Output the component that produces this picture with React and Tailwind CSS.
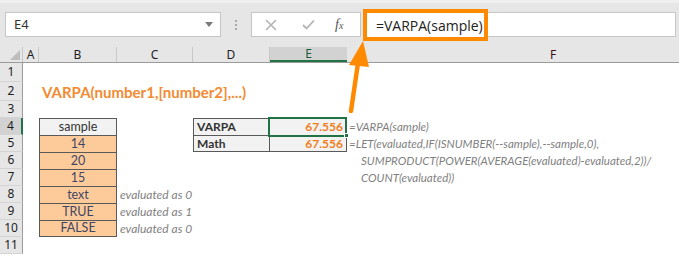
import React from 'react';

const cellFont = { fontFamily: 'Lato, "Open Sans", sans-serif' };

const RowHead = ({ n, active }) => (
  <div
    className={`w-[23px] shrink-0 flex items-center justify-center text-[12px] border-b border-[#d4d4d4] ${
      active
        ? 'bg-[#d2d2d2] border-r-2 border-r-[#217346] text-[#1e1e1e]'
        : 'bg-[#e6e6e6] border-r border-r-[#9b9b9b] text-[#1e1e1e]'
    }`}
    style={{ fontFamily: '"Noto Sans", sans-serif' }}
  >
    {n}
  </div>
);

const Row = ({ n, h, active, children }) => (
  <div className={`flex ${h}`}>
    <RowHead n={n} active={active} />
    {children}
  </div>
);

const A = () => <div className="w-[16px] shrink-0" />;
const C = ({ children }) => (
  <div className="w-[76px] shrink-0 flex items-center pl-[3px] whitespace-nowrap text-[12px] italic text-[#7f7f7f]">
    {children}
  </div>
);
const EmptyC = () => <div className="w-[76px] shrink-0" />;
const EmptyB = () => <div className="w-[78px] shrink-0" />;
const EmptyDE = () => <div className="w-[154px] shrink-0" />;

const SampleCell = ({ children, head, last }) => (
  <div
    className={`w-[78px] shrink-0 flex items-center justify-center text-[12.5px] border-l border-r border-t border-[#595959] ${
      last ? 'border-b' : ''
    } ${head ? 'bg-[#f2f2f2] text-[#333]' : 'bg-[#fdcb99] text-[#3f4566]'}`}
  >
    {children}
  </div>
);

const F = ({ children, indent }) => (
  <div
    className={`flex-1 flex items-center whitespace-nowrap text-[11.5px] italic text-[#7f7f7f] ${
      indent ? 'pl-[14px]' : 'pl-[2px]'
    }`}
  >
    {children}
  </div>
);

const Cols = [
  { l: 'A', w: 'w-[16px]' },
  { l: 'B', w: 'w-[78px]' },
  { l: 'C', w: 'w-[76px]' },
  { l: 'D', w: 'w-[77px]' },
];

export default function App() {
  return (
    <div className="relative w-[679px] h-[255px] overflow-hidden bg-white" style={cellFont}>
      {/* formula bar */}
      <div className="h-[47px] bg-[#e6e6e6] border-t-[3px] border-[#efefef] flex items-start pt-[6px]">
        <div className="ml-[5px] mt-[3px] w-[216px] h-[25px] bg-white border border-[#c6c6c6] flex items-center justify-between pl-[8px] pr-[7px]">
          <span className="text-[13px] text-[#333]" style={{ fontFamily: '"Noto Sans", sans-serif' }}>
            E4
          </span>
          <svg width="8" height="5" viewBox="0 0 8 5">
            <path d="M0 0h8L4 5z" fill="#7a7a7a" />
          </svg>
        </div>
        <div className="w-[30px] mt-[3px] h-[25px] flex flex-col items-center justify-center gap-[2px]">
          <span className="w-[2px] h-[2px] bg-[#a8a8a8]" />
          <span className="w-[2px] h-[2px] bg-[#a8a8a8]" />
          <span className="w-[2px] h-[2px] bg-[#a8a8a8]" />
        </div>
        <div className="mt-[3px] w-[110px] h-[25px] bg-white border border-[#c6c6c6] flex items-center pl-[13px]">
          <svg width="12" height="12" viewBox="0 0 12 12">
            <path d="M1 1L11 11M11 1L1 11" stroke="#b4b4b4" strokeWidth="1.6" />
          </svg>
          <svg className="ml-[25px]" width="13" height="11" viewBox="0 0 13 11">
            <path d="M1 6L4.5 9.5L12 1.5" stroke="#b4b4b4" strokeWidth="1.8" fill="none" />
          </svg>
          <span
            className="ml-[20px] text-[14px] italic text-[#555]"
            style={{ fontFamily: '"Liberation Serif", serif' }}
          >
            f<span className="text-[10px]">x</span>
          </span>
        </div>
        <div
          className="ml-[2px] w-[125px] h-[32px] bg-white border-4 border-[#ff8a00] flex items-center pl-[9px] whitespace-nowrap text-[14px] text-[#222]"
          style={{ fontFamily: '"Open Sans", sans-serif' }}
        >
          =VARPA(sample)
        </div>
        <div className="mt-[3px] mr-[3px] flex-1 h-[25px] bg-white border-y border-r border-[#c6c6c6]" />
      </div>

      {/* column headers */}
      <div
        className="flex h-[16px] bg-[#e6e6e6] border-b border-[#9b9b9b] text-[12px] text-[#1e1e1e]"
        style={{ fontFamily: '"Noto Sans", sans-serif' }}
      >
        <div className="w-[23px] shrink-0 relative border-r border-[#c8c8c8]">
          <svg className="absolute right-[2px] bottom-[2px]" width="10" height="10" viewBox="0 0 10 10">
            <path d="M10 0V10H0z" fill="#bdbdbd" />
          </svg>
        </div>
        {Cols.map((c) => (
          <div key={c.l} className={`${c.w} shrink-0 flex items-center justify-center border-r border-[#c8c8c8]`}>
            {c.l}
          </div>
        ))}
        <div className="w-[77px] shrink-0 flex items-center justify-center bg-[#d2d2d2] border-b-2 border-[#217346] text-[#185c37]">
          E
        </div>
        <div className="w-[412px] shrink-0 flex items-center justify-center text-[#3b1010]">F</div>
      </div>

      <Row n="1" h="h-[19px]" />
      <Row n="2" h="h-[19px]">
        <A />
        <div className="flex items-center pl-[3px] pt-[2px] whitespace-nowrap text-[15px] font-bold text-[#f28b32]">
          VARPA(number1,[number2],...)
        </div>
      </Row>
      <Row n="3" h="h-[17px]" />
      <Row n="4" h="h-[17px]" active>
        <A />
        <SampleCell head>sample</SampleCell>
        <EmptyC />
        <div className="w-[77px] shrink-0 flex items-center pl-[3px] text-[12px] font-bold text-[#333] bg-[#f2f2f2] border border-b-0 border-[#595959]">
          VARPA
        </div>
        <div className="w-[77px] shrink-0 relative flex items-center justify-end pr-[3px] text-[12px] font-bold text-[#f07d1c] bg-[#f2f2f2] border-t border-r border-[#595959]">
          67.556
          <div className="absolute -left-[2px] -top-[2px] w-[79px] h-[20px] border-2 border-[#217346]" />
          <div className="absolute -right-[3px] -bottom-[3px] w-[5px] h-[5px] bg-[#217346] border border-white" />
        </div>
        <F>=VARPA(sample)</F>
      </Row>
      <Row n="5" h="h-[17px]">
        <A />
        <SampleCell>14</SampleCell>
        <EmptyC />
        <div className="w-[77px] shrink-0 flex items-center pl-[3px] text-[12px] font-bold text-[#333] bg-[#f2f2f2] border border-[#595959]">
          Math
        </div>
        <div className="w-[77px] shrink-0 flex items-center justify-end pr-[3px] text-[12px] font-bold text-[#f07d1c] bg-[#f2f2f2] border-t border-r border-b border-[#595959]">
          67.556
        </div>
        <F>=LET(evaluated,IF(ISNUMBER(--sample),--sample,0),</F>
      </Row>
      <Row n="6" h="h-[17px]">
        <A />
        <SampleCell>20</SampleCell>
        <EmptyC />
        <EmptyDE />
        <F indent>SUMPRODUCT(POWER(AVERAGE(evaluated)-evaluated,2))/</F>
      </Row>
      <Row n="7" h="h-[17px]">
        <A />
        <SampleCell>15</SampleCell>
        <EmptyC />
        <EmptyDE />
        <F indent>COUNT(evaluated))</F>
      </Row>
      <Row n="8" h="h-[17px]">
        <A />
        <SampleCell>text</SampleCell>
        <C>evaluated as 0</C>
      </Row>
      <Row n="9" h="h-[17px]">
        <A />
        <SampleCell>TRUE</SampleCell>
        <C>evaluated as 1</C>
      </Row>
      <Row n="10" h="h-[17px]">
        <A />
        <SampleCell last>FALSE</SampleCell>
        <C>evaluated as 0</C>
      </Row>
      <Row n="11" h="h-[17px]">
        <A />
        <EmptyB />
      </Row>

      {/* callout arrow */}
      <svg className="absolute left-0 top-0 pointer-events-none" width="679" height="255">
        <path d="M358 63L351 111" stroke="#ff8a00" strokeWidth="4.5" strokeLinecap="round" />
        <path d="M363 41L349 65L369 67z" fill="#ff8a00" />
      </svg>
    </div>
  );
}
